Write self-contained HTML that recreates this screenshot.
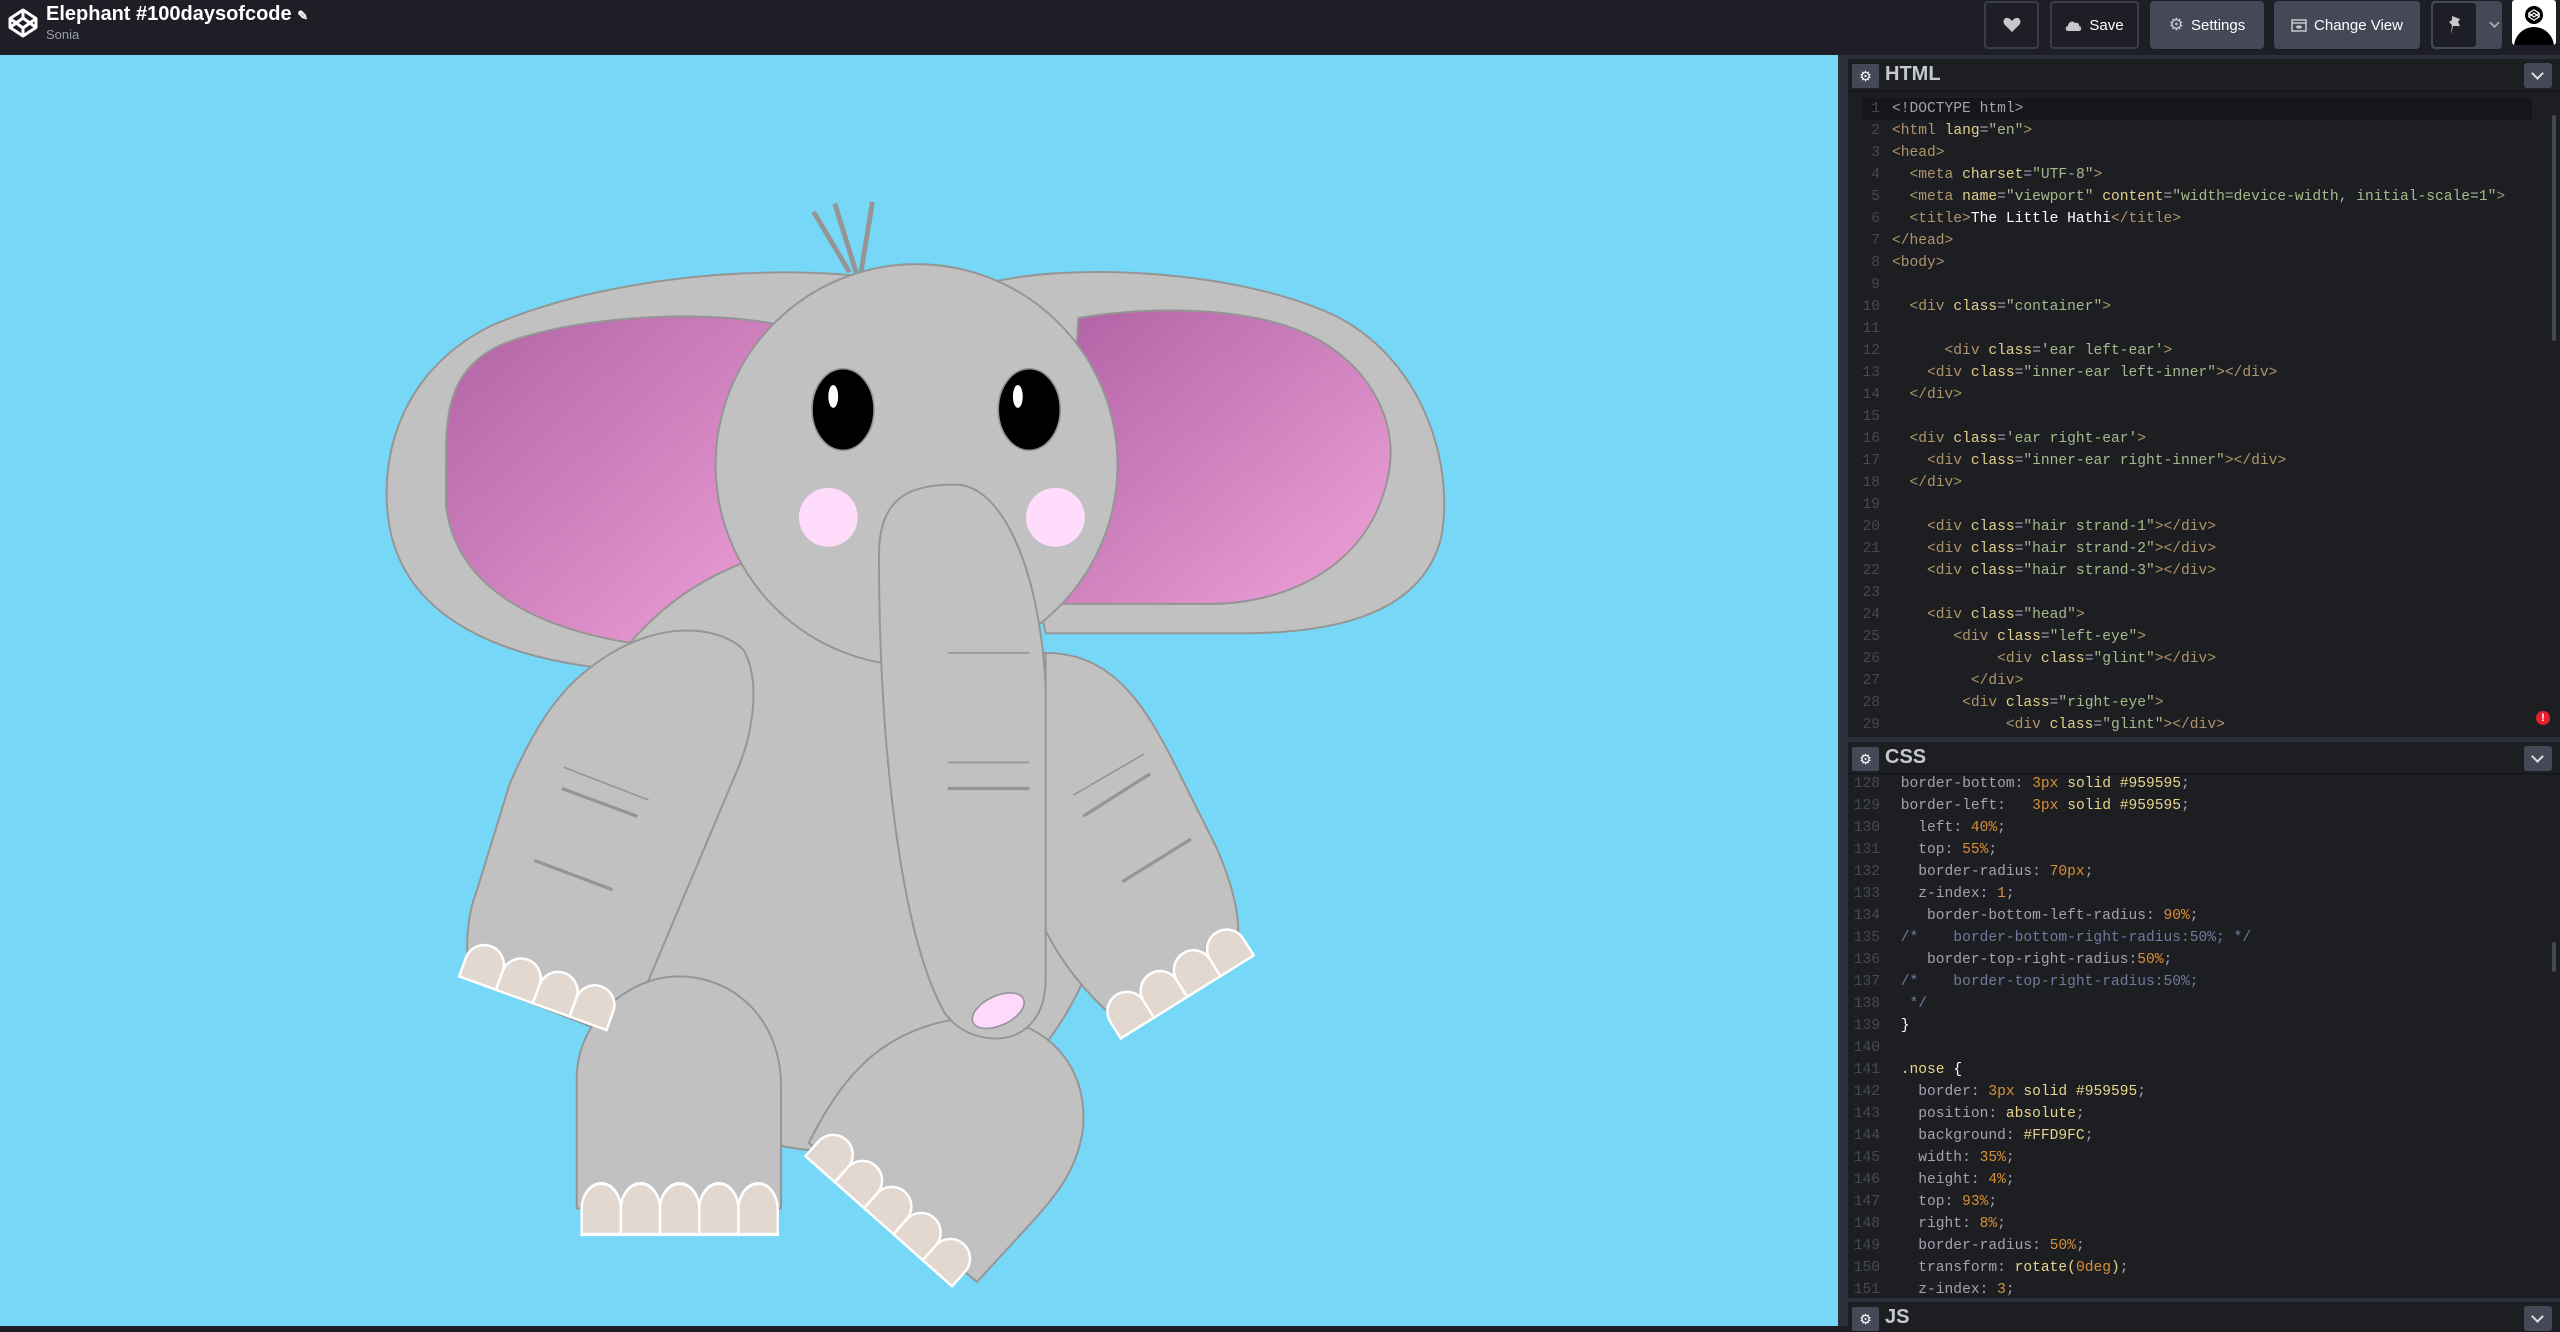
<!DOCTYPE html>
<html><head><meta charset="utf-8">
<style>
*{box-sizing:border-box;margin:0;padding:0}
body{width:2560px;height:1326px;overflow:hidden;background:#1e1f26;font-family:"Liberation Sans",sans-serif;position:relative}
.top{position:absolute;left:0;top:0;width:2560px;height:55px;background:#1e1f26}
.title{position:absolute;left:46px;top:3px;color:#fff;font-size:20px;font-weight:bold}
.user{position:absolute;left:46px;top:27px;color:#9a9ca8;font-size:13px}
.btn{position:absolute;top:1px;height:48px;border-radius:4px;color:#fff;font-size:15px;display:flex;align-items:center;justify-content:center;gap:7px}
.dk{background:#1e1f26;border:2px solid #3b3e4a}
.lt{background:#444857}
.preview{position:absolute;left:0;top:55px;width:1838px;height:1271px;background:#76d7f7}
.editor{position:absolute;left:1838px;top:55px;width:722px;height:1271px;background:#2c303a}
.pane{position:absolute;left:10px;width:712px;background:#1d1e22;overflow:hidden}
.hdr{height:33px;position:relative;border-bottom:2px solid #17181c}
.gear{position:absolute;left:4px;top:5px;width:27px;height:24px;background:#444857;border-radius:2px;color:#fff;font-size:14px;text-align:center;line-height:24px}
.hname{position:absolute;left:37px;top:4px;color:#c6c8d0;font-size:20px;font-weight:bold}
.col{position:absolute;right:8px;top:4px;width:28px;height:25px;background:#444857;border-radius:3px}
.col:after{content:"";position:absolute;left:9px;top:6px;width:7px;height:7px;border-right:2px solid #ddd;border-bottom:2px solid #ddd;transform:rotate(45deg)}
pre{font-family:"Liberation Mono",monospace;font-size:14.6px;line-height:22px;color:#a89fb1;position:relative}
.ln{display:inline-block;width:32px;text-align:right;color:#464955;margin-right:12px}
.t{color:#b0956a}.a{color:#e2cf8c}.s{color:#a9b88c}.w{color:#fff}.d{color:#a89fb1}
.n{color:#d98f36}.v{color:#e6d58a}.c{color:#6f7a9c}.p{color:#a89fb1}
</style></head><body>
<div class="top">
<svg style="position:absolute;left:8px;top:8px" width="30" height="30" viewBox="0 0 30 30"><g fill="none" stroke="#fff" stroke-width="3" stroke-linejoin="round"><path d="M15 2 L28 10.5 L28 19.5 L15 28 L2 19.5 L2 10.5 Z"/><path d="M15 2 V10 M15 20 V28 M2 10.5 L15 20 L28 10.5 M2 19.5 L15 10 L28 19.5"/></g></svg>
<div class="title">Elephant #100daysofcode <span style="font-size:13px">✎</span></div>
<div class="user">Sonia</div>
<div class="btn dk" style="left:1984px;width:55px"><svg width="18" height="16" viewBox="0 0 18 16"><path d="M9 15 L2 8 C-1 5 1 0 5 1 C7 1.5 8 3 9 4 C10 3 11 1.5 13 1 C17 0 19 5 16 8 Z" fill="#c8c8cc"/></svg></div>
<div class="btn dk" style="left:2050px;width:89px"><svg width="17" height="11" viewBox="0 0 17 11"><path d="M3 11 C0 11 0 6 3 6 C3 2 8 0 10 3 C12 2 15 4 14 6 C17 6 17 11 14 11 Z" fill="#c8c8cc"/></svg>Save</div>
<div class="btn lt" style="left:2150px;width:114px"><span style="color:#c8c8cc;font-size:17px">⚙</span>Settings</div>
<div class="btn lt" style="left:2274px;width:146px"><svg width="16" height="13" viewBox="0 0 16 13"><rect x="1" y="1" width="14" height="11" fill="none" stroke="#c8c8cc" stroke-width="1.5"/><line x1="1" y1="4" x2="15" y2="4" stroke="#c8c8cc" stroke-width="1.5"/><ellipse cx="8" cy="8" rx="3" ry="1.6" fill="#c8c8cc"/></svg>Change View</div>
<div class="btn lt" style="left:2431px;width:71px;justify-content:flex-start;padding:2px"><div style="width:47px;height:44px;background:#1e1f26;border-radius:3px;display:flex;align-items:center;justify-content:center"><svg width="14" height="20" viewBox="0 0 14 20"><path d="M4 1 L12 4 L10 7 L12 11 L5 11 L3 20 L4 10 L1 7 L4 5 Z" fill="#c8c8cc"/></svg></div><svg style="margin-left:6px" width="12" height="8" viewBox="0 0 12 8"><path d="M1 1 L6 6 L11 1" fill="none" stroke="#aaa" stroke-width="2"/></svg></div>
<div style="position:absolute;left:2512px;top:0;width:44px;height:45px;background:#fff;border-radius:3px;overflow:hidden"><div style="position:absolute;left:2px;top:27px;width:40px;height:30px;background:#000;border-radius:20px 20px 0 0"></div><div style="position:absolute;left:11px;top:4px;width:22px;height:22px;background:#000;border-radius:50%;border:2px solid #fff"></div><svg style="position:absolute;left:16px;top:9px" width="12" height="12" viewBox="0 0 30 30"><path d="M15 2 L28 10.5 L28 19.5 L15 28 L2 19.5 L2 10.5 Z M2 10.5 L15 20 L28 10.5 M2 19.5 L15 10 L28 19.5" fill="none" stroke="#fff" stroke-width="3"/></svg></div>
</div>

<div class="preview">
<svg width="1838" height="1271" viewBox="0 34 1125 778">
<defs><linearGradient id="g" x1="0" y1="0" x2="1" y2="1"><stop offset="0" stop-color="#b062a5"/><stop offset="1" stop-color="#f0a3d9"/></linearGradient></defs>
<g stroke="#959595" stroke-width="1.2" fill="#c1c1c1">
<path d="M560 175 C500 160 380 165 300 200 C240 230 230 290 240 330 C255 385 320 412 420 412 L520 400 Z"/>
<path d="M600 175 C650 160 760 165 820 195 C875 225 890 290 882 330 C870 375 820 388 760 388 L640 388 Z"/>
</g>
<path d="M480 200 C440 190 360 192 310 210 C280 222 273 245 273 275 L273 310 C280 370 350 395 430 398 L490 380 Z" fill="url(#g)" stroke="#959595" stroke-width="1.2"/>
<path d="M660 195 C700 188 770 186 810 210 C845 232 855 265 850 290 C840 345 790 370 740 370 L650 370 Z" fill="url(#g)" stroke="#959595" stroke-width="1.2"/>
<g stroke="#959595" stroke-width="3"><line x1="520" y1="167" x2="498" y2="130"/><line x1="524" y1="167" x2="511" y2="125"/><line x1="527" y1="167" x2="534" y2="124"/></g>
<g stroke="#959595" stroke-width="1.2" fill="#c1c1c1">
<ellipse cx="510" cy="520" rx="170" ry="185"/>
<path d="M640 400 C680 400 700 430 720 470 L745 520 C760 555 760 575 755 590 L690 630 C665 610 650 590 640 570 Z"/>
<path d="M360 410 C400 378 440 383 455 398 C465 415 462 445 452 470 L395 605 C385 620 375 628 365 630 L288 600 C284 580 286 560 292 545 L312 480 C325 450 340 425 360 410 Z"/>
<path d="M353 660 C353 625 385 598 415 598 C450 598 478 625 478 665 L478 740 L353 740 Z"/>
<path d="M525 655 C550 628 590 618 620 626 C650 635 665 660 663 690 C660 715 648 730 632 748 L598 785 L495 700 C505 680 515 665 525 655 Z"/>
<ellipse cx="561" cy="285" rx="123" ry="123"/>
<path d="M538 340 C538 302 560 297 585 297 C612 297 636 345 640 420 L640 600 C640 625 625 636 610 636 C596 636 585 630 578 620 C550 570 538 450 538 340 Z"/>
</g>
<ellipse cx="516" cy="251" rx="19" ry="25" fill="#000" stroke="#959595"/>
<ellipse cx="630" cy="251" rx="19" ry="25" fill="#000" stroke="#959595"/>
<ellipse cx="510" cy="243" rx="3" ry="7" fill="#fff"/><ellipse cx="623" cy="243" rx="3" ry="7" fill="#fff"/>
<circle cx="507" cy="317" r="18" fill="#ffdcfb"/><circle cx="646" cy="317" r="18" fill="#ffdcfb"/>
<ellipse cx="611" cy="619" rx="17" ry="9" transform="rotate(-25 611 619)" fill="#ffd9fc" stroke="#959595"/>
<g stroke="#959595"><line x1="580" y1="400" x2="630" y2="400"/><line x1="580" y1="467" x2="630" y2="467"/><line x1="580" y1="483" x2="630" y2="483" stroke-width="2"/>
<line x1="345" y1="470" x2="397" y2="490"/><line x1="344" y1="483" x2="390" y2="500" stroke-width="2"/><line x1="327" y1="527" x2="375" y2="545" stroke-width="2"/>
<line x1="657" y1="487" x2="700" y2="462"/><line x1="663" y1="500" x2="704" y2="474" stroke-width="2"/><line x1="687" y1="540" x2="729" y2="514" stroke-width="2"/></g>
<defs><path id="toe" d="M0 0 L0 -12 A12 12 0 0 1 24 -12 L24 0 Z" fill="#e3d8cf" stroke="#fff" stroke-width="1.5"/></defs>
<g transform="translate(281 598) rotate(20)"><use href="#toe"/><use href="#toe" x="24"/><use href="#toe" x="48"/><use href="#toe" x="72"/></g>
<g transform="translate(686 636) rotate(-32)"><use href="#toe"/><use href="#toe" x="24"/><use href="#toe" x="48"/><use href="#toe" x="72"/></g>
<g transform="translate(356 756)"><use href="#toe" transform="scale(1,1.3)"/><use href="#toe" transform="translate(24 0) scale(1,1.3)"/><use href="#toe" transform="translate(48 0) scale(1,1.3)"/><use href="#toe" transform="translate(72 0) scale(1,1.3)"/><use href="#toe" transform="translate(96 0) scale(1,1.3)"/></g>
<g transform="translate(493 708) rotate(41.6)"><use href="#toe"/><use href="#toe" x="24"/><use href="#toe" x="48"/><use href="#toe" x="72"/><use href="#toe" x="96"/></g>
</svg>
</div>

<div class="editor">
<div class="pane" style="top:4px;height:678px">
<div class="hdr"><div class="gear">⚙</div><div class="hname">HTML</div><div class="col"></div></div>
<div style="position:absolute;right:4px;top:56px;width:4px;height:226px;background:#444857;border-radius:2px"></div>
<pre style="margin-top:6px"><span style="display:block;background:#15161a;width:670px;margin-left:14px;text-indent:-14px"><span class="ln">1</span><span class="d">&lt;!DOCTYPE html&gt;</span></span><span class="ln">2</span><span class="t">&lt;html</span> <span class="a">lang</span>=<span class="s">"en"</span><span class="t">&gt;</span>
<span class="ln">3</span><span class="t">&lt;head&gt;</span>
<span class="ln">4</span>  <span class="t">&lt;meta</span> <span class="a">charset</span>=<span class="s">"UTF-8"</span><span class="t">&gt;</span>
<span class="ln">5</span>  <span class="t">&lt;meta</span> <span class="a">name</span>=<span class="s">"viewport"</span> <span class="a">content</span>=<span class="s">"width=device-width, initial-scale=1"</span><span class="t">&gt;</span>
<span class="ln">6</span>  <span class="t">&lt;title&gt;</span><span class="w">The Little Hathi</span><span class="t">&lt;/title&gt;</span>
<span class="ln">7</span><span class="t">&lt;/head&gt;</span>
<span class="ln">8</span><span class="t">&lt;body&gt;</span>
<span class="ln">9</span>
<span class="ln">10</span>  <span class="t">&lt;div</span> <span class="a">class</span>=<span class="s">"container"</span><span class="t">&gt;</span>
<span class="ln">11</span>
<span class="ln">12</span>      <span class="t">&lt;div</span> <span class="a">class</span>=<span class="s">'ear left-ear'</span><span class="t">&gt;</span>
<span class="ln">13</span>    <span class="t">&lt;div</span> <span class="a">class</span>=<span class="s">"inner-ear left-inner"</span><span class="t">&gt;&lt;/div&gt;</span>
<span class="ln">14</span>  <span class="t">&lt;/div&gt;</span>
<span class="ln">15</span>
<span class="ln">16</span>  <span class="t">&lt;div</span> <span class="a">class</span>=<span class="s">'ear right-ear'</span><span class="t">&gt;</span>
<span class="ln">17</span>    <span class="t">&lt;div</span> <span class="a">class</span>=<span class="s">"inner-ear right-inner"</span><span class="t">&gt;&lt;/div&gt;</span>
<span class="ln">18</span>  <span class="t">&lt;/div&gt;</span>
<span class="ln">19</span>
<span class="ln">20</span>    <span class="t">&lt;div</span> <span class="a">class</span>=<span class="s">"hair strand-1"</span><span class="t">&gt;&lt;/div&gt;</span>
<span class="ln">21</span>    <span class="t">&lt;div</span> <span class="a">class</span>=<span class="s">"hair strand-2"</span><span class="t">&gt;&lt;/div&gt;</span>
<span class="ln">22</span>    <span class="t">&lt;div</span> <span class="a">class</span>=<span class="s">"hair strand-3"</span><span class="t">&gt;&lt;/div&gt;</span>
<span class="ln">23</span>
<span class="ln">24</span>    <span class="t">&lt;div</span> <span class="a">class</span>=<span class="s">"head"</span><span class="t">&gt;</span>
<span class="ln">25</span>       <span class="t">&lt;div</span> <span class="a">class</span>=<span class="s">"left-eye"</span><span class="t">&gt;</span>
<span class="ln">26</span>            <span class="t">&lt;div</span> <span class="a">class</span>=<span class="s">"glint"</span><span class="t">&gt;&lt;/div&gt;</span>
<span class="ln">27</span>         <span class="t">&lt;/div&gt;</span>
<span class="ln">28</span>        <span class="t">&lt;div</span> <span class="a">class</span>=<span class="s">"right-eye"</span><span class="t">&gt;</span>
<span class="ln">29</span>             <span class="t">&lt;div</span> <span class="a">class</span>=<span class="s">"glint"</span><span class="t">&gt;&lt;/div&gt;</span></pre>
<div style="position:absolute;left:688px;top:652px;width:14px;height:14px;border-radius:50%;background:#e9202c;color:#fff;font-size:11px;font-weight:bold;text-align:center;line-height:14px">!</div>
</div>

<div class="pane" style="top:687px;height:556px">
<div class="hdr"><div class="gear">⚙</div><div class="hname">CSS</div><div class="col"></div></div>
<div style="position:absolute;right:4px;top:200px;width:4px;height:30px;background:#444857;border-radius:2px"></div>
<pre style="margin-top:-2px"><span class="ln">128</span> <span class="p">border-bottom</span>: <span class="n">3px</span> <span class="v">solid #959595</span>;
<span class="ln">129</span> <span class="p">border-left</span>:   <span class="n">3px</span> <span class="v">solid #959595</span>;
<span class="ln">130</span>   <span class="p">left</span>: <span class="n">40%</span>;
<span class="ln">131</span>   <span class="p">top</span>: <span class="n">55%</span>;
<span class="ln">132</span>   <span class="p">border-radius</span>: <span class="n">70px</span>;
<span class="ln">133</span>   <span class="p">z-index</span>: <span class="n">1</span>;
<span class="ln">134</span>    <span class="p">border-bottom-left-radius</span>: <span class="n">90%</span>;
<span class="ln">135</span> <span class="c">/*    border-bottom-right-radius:50%; */</span>
<span class="ln">136</span>    <span class="p">border-top-right-radius</span>:<span class="n">50%</span>;
<span class="ln">137</span> <span class="c">/*    border-top-right-radius:50%;</span>
<span class="ln">138</span>  <span class="c">*/</span>
<span class="ln">139</span> <span class="w">}</span>
<span class="ln">140</span>
<span class="ln">141</span> <span class="v">.nose</span> <span class="w">{</span>
<span class="ln">142</span>   <span class="p">border</span>: <span class="n">3px</span> <span class="v">solid #959595</span>;
<span class="ln">143</span>   <span class="p">position</span>: <span class="v">absolute</span>;
<span class="ln">144</span>   <span class="p">background</span>: <span class="v">#FFD9FC</span>;
<span class="ln">145</span>   <span class="p">width</span>: <span class="n">35%</span>;
<span class="ln">146</span>   <span class="p">height</span>: <span class="n">4%</span>;
<span class="ln">147</span>   <span class="p">top</span>: <span class="n">93%</span>;
<span class="ln">148</span>   <span class="p">right</span>: <span class="n">8%</span>;
<span class="ln">149</span>   <span class="p">border-radius</span>: <span class="n">50%</span>;
<span class="ln">150</span>   <span class="p">transform</span>: <span class="v">rotate(</span><span class="n">0deg</span><span class="v">)</span>;
<span class="ln">151</span>   <span class="p">z-index</span>: <span class="n">3</span>;</pre>
</div>

<div class="pane" style="top:1247px;height:30px">
<div class="hdr"><div class="gear">⚙</div><div class="hname">JS</div><div class="col"></div></div>
</div>
</div>
</body></html>
